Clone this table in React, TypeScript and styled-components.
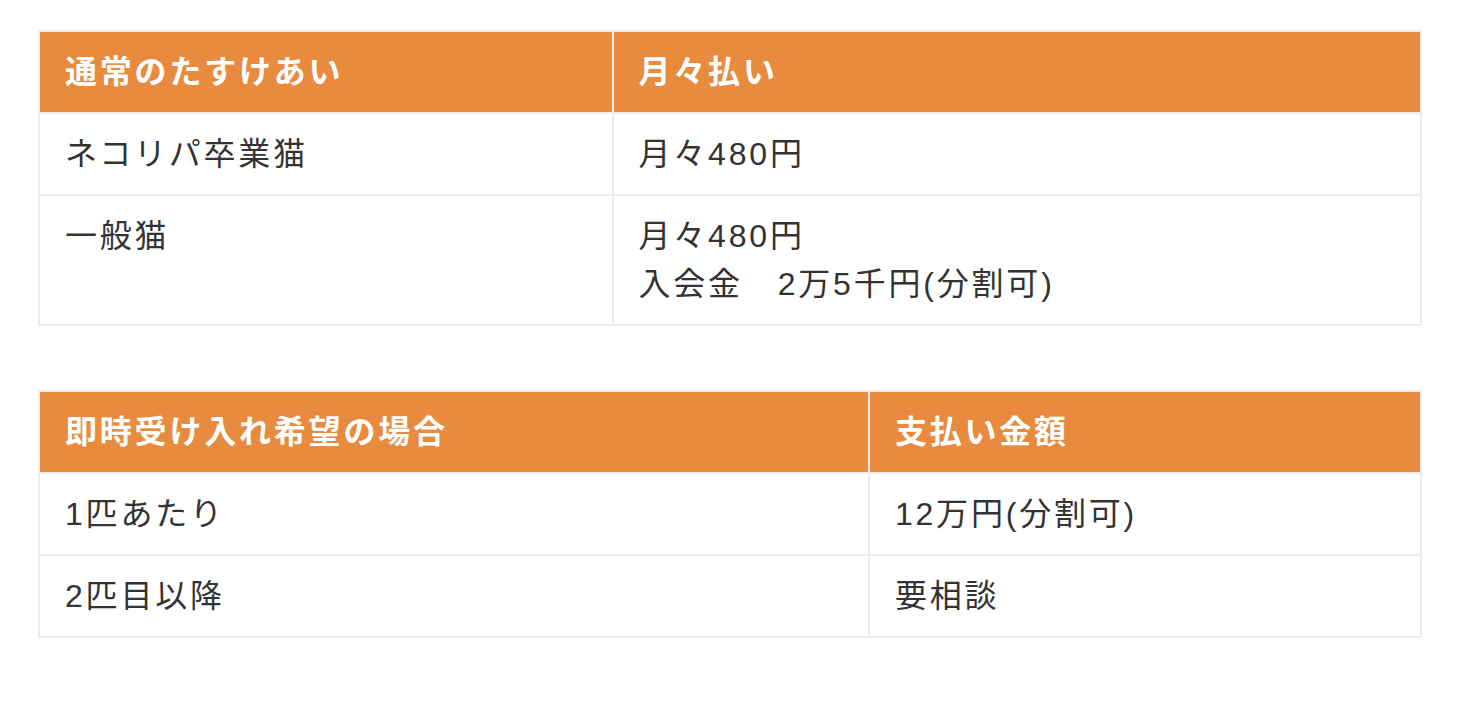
import React from "react";
import styled, { createGlobalStyle } from "styled-components";

const GlobalStyle = createGlobalStyle`
  html, body {
    margin: 0;
    padding: 0;
    background: #ffffff;
  }
  body {
    font-family: "Liberation Sans", "Noto Sans CJK JP", sans-serif;
    color: #333333;
  }
`;

const Page = styled.div`
  display: flex;
  flex-direction: column;
  gap: 64px;
  padding: 30px 40px 0 38px;
`;

const StyledTable = styled.table`
  width: 100%;
  border-collapse: collapse;
  table-layout: fixed;
  border: 2px solid #ececec;
`;

const HeadCell = styled.th`
  background-color: #e88b3f;
  color: #ffffff;
  font-weight: bold;
  text-align: left;
  font-size: 32px;
  line-height: 48px;
  letter-spacing: 2.8px;
  padding: 16px 25px;
  border: 2px solid #ececec;
`;

const Cell = styled.td`
  font-size: 32px;
  line-height: 48px;
  letter-spacing: 2.8px;
  padding: 16px 25px;
  vertical-align: top;
  border: 2px solid #ececec;
  color: #333333;
`;

interface PriceTableProps {
  firstWidth: string;
  head: [string, string];
  rows: [string, React.ReactNode][];
}

function PriceTable(props: PriceTableProps) {
  return (
    <StyledTable>
      <colgroup>
        <col style={{ width: props.firstWidth }} />
        <col />
      </colgroup>
      <thead>
        <tr>
          <HeadCell>{props.head[0]}</HeadCell>
          <HeadCell>{props.head[1]}</HeadCell>
        </tr>
      </thead>
      <tbody>
        {props.rows.map((row, i) => (
          <tr key={i}>
            <Cell>{row[0]}</Cell>
            <Cell>{row[1]}</Cell>
          </tr>
        ))}
      </tbody>
    </StyledTable>
  );
}

export default function App() {
  return (
    <>
      <GlobalStyle />
      <Page>
        <PriceTable
          firstWidth="41.5%"
          head={["通常のたすけあい", "月々払い"]}
          rows={[
            ["ネコリパ卒業猫", "月々480円"],
            [
              "一般猫",
              <>
                月々480円
                <br />
                入会金　2万5千円(分割可)
              </>,
            ],
          ]}
        />
        <PriceTable
          firstWidth="60.05%"
          head={["即時受け入れ希望の場合", "支払い金額"]}
          rows={[
            ["1匹あたり", "12万円(分割可)"],
            ["2匹目以降", "要相談"],
          ]}
        />
      </Page>
    </>
  );
}
